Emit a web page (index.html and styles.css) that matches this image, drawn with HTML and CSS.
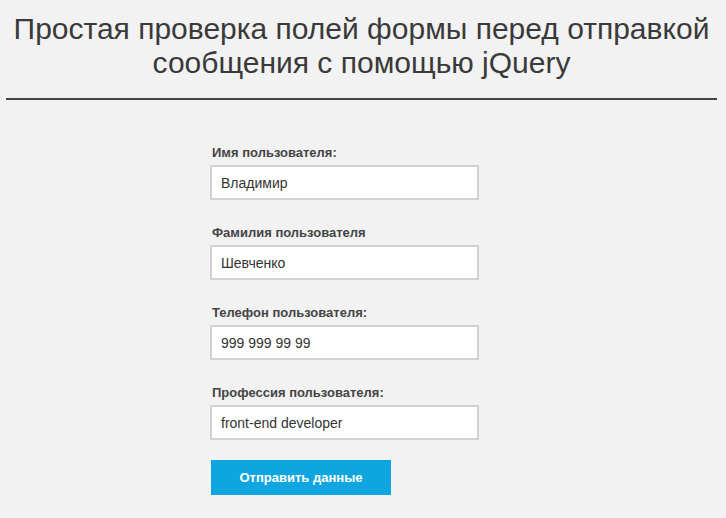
FILE: index.html
```html
<!DOCTYPE html>
<html lang="ru">
<head>
<meta charset="utf-8">
<link rel="stylesheet" href="styles.css">
</head>
<body>
<div class="page">
  <header class="head">
    <h1 class="title"><span class="line">Простая проверка полей формы перед отправкой</span><span class="line">сообщения с помощью jQuery</span></h1>
  </header>
  <form class="form">
    <div class="field">
      <label class="label">Имя пользователя:</label>
      <input class="input" type="text" value="Владимир">
    </div>
    <div class="field">
      <label class="label">Фамилия пользователя</label>
      <input class="input" type="text" value="Шевченко">
    </div>
    <div class="field">
      <label class="label">Телефон пользователя:</label>
      <input class="input" type="text" value="999 999 99 99">
    </div>
    <div class="field">
      <label class="label">Профессия пользователя:</label>
      <input class="input" type="text" value="front-end developer">
    </div>
    <button class="submit" type="button">Отправить данные</button>
  </form>
</div>
</body>
</html>
```
FILE: styles.css
```css
html, body {
  margin: 0;
  padding: 0;
  background: #f2f2f2;
}
.page {
  padding: 0 9px 0 6px;
}
.head {
  padding: 12px 0 18px;
  border-bottom: 2px solid #444;
}
.title {
  margin: 0;
  font-family: "Liberation Sans", Arial, sans-serif;
  font-weight: normal;
  font-size: 30px;
  line-height: 34px;
  color: #3a3a3a;
  text-align: center;
  white-space: nowrap;
}
.line {
  display: block;
}
.form {
  display: flex;
  flex-direction: column;
  width: 270px;
  margin: 45px 0 0 204px;
}
.field {
  display: flex;
  flex-direction: column;
  margin-bottom: 25px;
}
.field:last-of-type {
  margin-bottom: 20px;
}
.label {
  font-family: "Liberation Sans", Arial, sans-serif;
  font-weight: bold;
  font-size: 13px;
  color: #444;
  margin: 0 0 5px 2px;
  height: 15px;
  line-height: 15px;
}
.input {
  box-sizing: border-box;
  width: 269px;
  height: 35px;
  margin: 0;
  padding: 0 9px;
  border: 2px solid #d2d2d2;
  border-radius: 0;
  background: #fff;
  font-family: "Liberation Sans", Arial, sans-serif;
  font-size: 14px;
  color: #333;
  outline: none;
}
.submit {
  box-sizing: border-box;
  width: 180px;
  height: 35px;
  margin: 0 0 0 1px;
  border: 0;
  background: #0fa6df;
  color: #fff;
  font-family: "Liberation Sans", Arial, sans-serif;
  font-weight: bold;
  font-size: 13px;
  cursor: pointer;
}
```
